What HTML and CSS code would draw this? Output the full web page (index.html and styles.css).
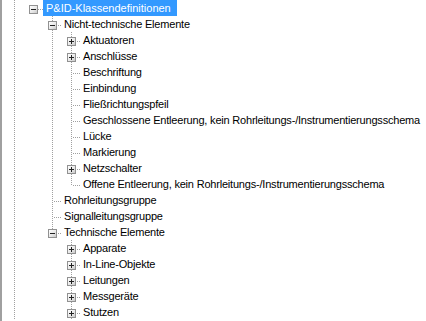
FILE: index.html
```html
<!DOCTYPE html>
<html lang="de">
<head>
    <meta charset="UTF-8">
    <title>P&amp;ID-Klassendefinitionen</title>
    <link rel="stylesheet" href="styles.css">
</head>
<body>
    <!-- Tree view -->
    <div class="tree">
        <div class="row">
            <span class="cell v"></span><span class="cell h"><span class="btn minus"></span></span>
            <span class="label selected">P&amp;ID-Klassendefinitionen</span>
        </div>
        <div class="row">
            <span class="cell v"></span><span class="cell"></span><span class="cell t"><span class="btn minus"></span></span>
            <span class="label">Nicht-technische Elemente</span>
        </div>
        <div class="row">
            <span class="cell v"></span><span class="cell"></span><span class="cell v"></span><span class="cell t"><span class="btn plus"></span></span>
            <span class="label">Aktuatoren</span>
        </div>
        <div class="row">
            <span class="cell v"></span><span class="cell"></span><span class="cell v"></span><span class="cell t"><span class="btn plus"></span></span>
            <span class="label">Anschlüsse</span>
        </div>
        <div class="row">
            <span class="cell v"></span><span class="cell"></span><span class="cell v"></span><span class="cell t"></span>
            <span class="label">Beschriftung</span>
        </div>
        <div class="row">
            <span class="cell v"></span><span class="cell"></span><span class="cell v"></span><span class="cell t"></span>
            <span class="label">Einbindung</span>
        </div>
        <div class="row">
            <span class="cell v"></span><span class="cell"></span><span class="cell v"></span><span class="cell t"></span>
            <span class="label">Fließrichtungspfeil</span>
        </div>
        <div class="row">
            <span class="cell v"></span><span class="cell"></span><span class="cell v"></span><span class="cell t"></span>
            <span class="label">Geschlossene Entleerung, kein Rohrleitungs-/Instrumentierungsschema</span>
        </div>
        <div class="row">
            <span class="cell v"></span><span class="cell"></span><span class="cell v"></span><span class="cell t"></span>
            <span class="label">Lücke</span>
        </div>
        <div class="row">
            <span class="cell v"></span><span class="cell"></span><span class="cell v"></span><span class="cell t"></span>
            <span class="label">Markierung</span>
        </div>
        <div class="row">
            <span class="cell v"></span><span class="cell"></span><span class="cell v"></span><span class="cell t"><span class="btn plus"></span></span>
            <span class="label">Netzschalter</span>
        </div>
        <div class="row">
            <span class="cell v"></span><span class="cell"></span><span class="cell v"></span><span class="cell l"></span>
            <span class="label">Offene Entleerung, kein Rohrleitungs-/Instrumentierungsschema</span>
        </div>
        <div class="row">
            <span class="cell v"></span><span class="cell"></span><span class="cell t"></span>
            <span class="label">Rohrleitungsgruppe</span>
        </div>
        <div class="row">
            <span class="cell v"></span><span class="cell"></span><span class="cell t"></span>
            <span class="label">Signalleitungsgruppe</span>
        </div>
        <div class="row">
            <span class="cell v"></span><span class="cell"></span><span class="cell l"><span class="btn minus"></span></span>
            <span class="label">Technische Elemente</span>
        </div>
        <div class="row">
            <span class="cell v"></span><span class="cell"></span><span class="cell"></span><span class="cell t"><span class="btn plus"></span></span>
            <span class="label">Apparate</span>
        </div>
        <div class="row">
            <span class="cell v"></span><span class="cell"></span><span class="cell"></span><span class="cell t"><span class="btn plus"></span></span>
            <span class="label">In-Line-Objekte</span>
        </div>
        <div class="row">
            <span class="cell v"></span><span class="cell"></span><span class="cell"></span><span class="cell t"><span class="btn plus"></span></span>
            <span class="label">Leitungen</span>
        </div>
        <div class="row">
            <span class="cell v"></span><span class="cell"></span><span class="cell"></span><span class="cell t"><span class="btn plus"></span></span>
            <span class="label">Messgeräte</span>
        </div>
        <div class="row">
            <span class="cell v"></span><span class="cell"></span><span class="cell"></span><span class="cell t"><span class="btn plus"></span></span>
            <span class="label">Stutzen</span>
        </div>
    </div>
</body>
</html>
```
FILE: styles.css
```css
* {
    margin: 0;
    padding: 0;
    box-sizing: border-box;
}

body {
    background: #fff;
    font-family: 'Liberation Sans', Arial, sans-serif;
    font-size: 11px;
    letter-spacing: -0.2px;
    color: #000;
    overflow: hidden;
}

.tree {
    height: 321px;
    border-left: 2px solid #a0a0a0;
    padding-left: 3px;
}

.row {
    display: flex;
    height: 16px;
    white-space: nowrap;
}

/* indent columns, 19px each, line at 9px */
.cell {
    display: block;
    width: 19px;
    height: 16px;
    flex: none;
}

.v {
    background: repeating-linear-gradient(to bottom, #a0a0a0 0 1px, transparent 1px 2px) 9px 0 / 1px 16px no-repeat;
}

.h {
    background: repeating-linear-gradient(to right, #a0a0a0 0 1px, transparent 1px 2px) 10px 9px / 9px 1px no-repeat;
}

.t {
    background:
        repeating-linear-gradient(to bottom, #a0a0a0 0 1px, transparent 1px 2px) 9px 0 / 1px 16px no-repeat,
        repeating-linear-gradient(to right, #a0a0a0 0 1px, transparent 1px 2px) 11px 9px / 8px 1px no-repeat;
}

.l {
    background:
        repeating-linear-gradient(to bottom, #a0a0a0 0 1px, transparent 1px 2px) 9px 0 / 1px 10px no-repeat,
        repeating-linear-gradient(to right, #a0a0a0 0 1px, transparent 1px 2px) 11px 9px / 8px 1px no-repeat;
}

/* expand / collapse buttons */
.btn {
    display: block;
    width: 9px;
    height: 9px;
    margin: 5px 0 0 5px;
    border: 1px solid #919191;
    background: linear-gradient(135deg, #fff 0%, #e6e6e6 60%, #c8c8c8 100%);
}

.minus {
    background:
        linear-gradient(#222, #222) 1px 3px / 5px 1px no-repeat,
        linear-gradient(135deg, #fff 0%, #e6e6e6 60%, #c8c8c8 100%);
}

.plus {
    background:
        linear-gradient(#222, #222) 1px 3px / 5px 1px no-repeat,
        linear-gradient(#222, #222) 3px 1px / 1px 5px no-repeat,
        linear-gradient(135deg, #fff 0%, #e6e6e6 60%, #c8c8c8 100%);
}

.label {
    display: block;
    height: 16px;
    line-height: 16px;
    padding: 0 3px 0 2px;
}

.selected {
    background: #3399ff;
    color: #fff;
    letter-spacing: 0;
    padding: 0 6px 0 3px;
}
```
